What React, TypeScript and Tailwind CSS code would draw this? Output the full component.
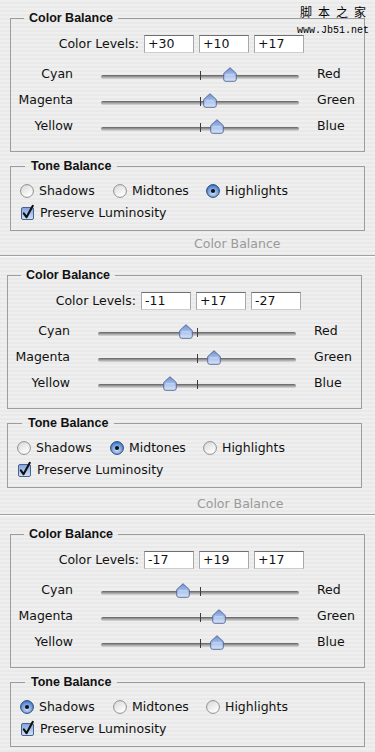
import React from "react";

type SliderDef = { left: string; right: string; value: number };
type Tone = "shadows" | "midtones" | "highlights";
type SectionDef = {
  levels: [string, string, string];
  sliders: SliderDef[];
  tone: Tone;
  variant: 1 | 2 | 3;
};

const sections: SectionDef[] = [
  {
    levels: ["+30", "+10", "+17"],
    sliders: [
      { left: "Cyan", right: "Red", value: 30 },
      { left: "Magenta", right: "Green", value: 10 },
      { left: "Yellow", right: "Blue", value: 17 },
    ],
    tone: "highlights",
    variant: 1,
  },
  {
    levels: ["-11", "+17", "-27"],
    sliders: [
      { left: "Cyan", right: "Red", value: -11 },
      { left: "Magenta", right: "Green", value: 17 },
      { left: "Yellow", right: "Blue", value: -27 },
    ],
    tone: "midtones",
    variant: 2,
  },
  {
    levels: ["-17", "+19", "+17"],
    sliders: [
      { left: "Cyan", right: "Red", value: -17 },
      { left: "Magenta", right: "Green", value: 19 },
      { left: "Yellow", right: "Blue", value: 17 },
    ],
    tone: "shadows",
    variant: 3,
  },
];

function Thumb({ value }: { value: number }) {
  const x = 99 + value * 0.99 - 7;
  return (
    <svg
      className="absolute top-[6px]"
      style={{ left: x }}
      width="14"
      height="15"
      viewBox="0 0 14 15"
    >
      <defs>
        <linearGradient id="thumbGrad" x1="0" y1="0" x2="0" y2="1">
          <stop offset="0" stopColor="#6f8fcf" />
          <stop offset="0.5" stopColor="#a3bdea" />
          <stop offset="1" stopColor="#d9e5f9" />
        </linearGradient>
      </defs>
      <path
        d="M7 0.7 L13.3 6.6 V12.2 Q13.3 14.3 11.2 14.3 H2.8 Q0.7 14.3 0.7 12.2 V6.6 Z"
        fill="url(#thumbGrad)"
        stroke="#4e6390"
        strokeWidth="0.9"
        strokeLinejoin="round"
      />
      <path d="M3 7.8 H11" stroke="#ffffff" strokeOpacity="0.45" strokeWidth="1" />
    </svg>
  );
}

function Radio({ on }: { on: boolean }) {
  if (on) {
    return (
      <svg width="14" height="14" viewBox="0 0 14 14" className="shrink-0">
        <defs>
          <radialGradient id="radioOn" cx="0.5" cy="0.65" r="0.6">
            <stop offset="0" stopColor="#d2e3fa" />
            <stop offset="1" stopColor="#3f78cc" />
          </radialGradient>
        </defs>
        <circle cx="7" cy="7" r="6.4" fill="url(#radioOn)" stroke="#2c4872" strokeWidth="1" />
        <circle cx="7" cy="7" r="2.1" fill="#111" />
      </svg>
    );
  }
  return (
    <svg width="14" height="14" viewBox="0 0 14 14" className="shrink-0">
      <defs>
        <linearGradient id="radioOff" x1="0" y1="0" x2="0.6" y2="1">
          <stop offset="0" stopColor="#d6d6d6" />
          <stop offset="1" stopColor="#ffffff" />
        </linearGradient>
      </defs>
      <circle cx="7" cy="7" r="6.4" fill="url(#radioOff)" stroke="#8d8d8d" strokeWidth="1" />
    </svg>
  );
}

function Checkbox() {
  return (
    <svg width="14" height="15" viewBox="0 0 14 15" className="shrink-0 overflow-visible">
      <defs>
        <linearGradient id="checkGrad" x1="0" y1="0" x2="0" y2="1">
          <stop offset="0" stopColor="#7fa3dc" />
          <stop offset="0.5" stopColor="#a9c3ee" />
          <stop offset="1" stopColor="#d3e1f8" />
        </linearGradient>
      </defs>
      <rect x="0.5" y="1.5" width="12" height="12" rx="1.5" fill="url(#checkGrad)" stroke="#46628f" strokeWidth="1" />
      <path d="M2.8 7.4 L5.5 11.2 L11.8 -0.2" fill="none" stroke="#111" strokeWidth="2.1" strokeLinecap="round" strokeLinejoin="round" />
    </svg>
  );
}

function LevelBox({ v }: { v: string }) {
  return (
    <div className="h-[18px] w-[50px] border border-t-[#6f6f6f] border-x-[#a8a8a8] border-b-[#cdcdcd] bg-white pl-[3px] leading-[16px]">
      {v}
    </div>
  );
}

function SliderRow({ s }: { s: SliderDef }) {
  return (
    <div className="flex h-[26px] items-center">
      <div className="w-[62px] text-right">{s.left}</div>
      <div className="relative ml-[28px] h-[26px] w-[198px]">
        <div className="absolute left-0 right-0 top-[14px] h-[4px] rounded-full bg-linear-to-b from-[#5f5f5f] via-[#a3a3a3] to-[#dadada]" />
        <div className="absolute left-[99px] top-[10px] h-[9px] w-px bg-[#3c3c3c]" />
        <Thumb value={s.value} />
      </div>
      <div className="ml-[18px]">{s.right}</div>
    </div>
  );
}

function Section({ d }: { d: SectionDef }) {
  const wrap = d.variant === 2 ? "pl-[7px] pr-[13px]" : "px-[10px]";
  const caption =
    d.variant === 2 ? "mt-[8px] pl-[197px]" : "mt-[5px] pl-[194px]";
  const sep = d.variant === 2 ? "mt-[2px]" : "mt-[3px]";
  const opts: { key: Tone; label: string }[] = [
    { key: "shadows", label: "Shadows" },
    { key: "midtones", label: "Midtones" },
    { key: "highlights", label: "Highlights" },
  ];
  return (
    <div>
      <div className={`pt-[10px] ${wrap}`}>
        <fieldset className="border border-[#9d9d9d] pb-[12px]">
          <legend className="ml-[13px] px-[5px] font-['Liberation_Sans',Arial,sans-serif] text-[12.5px] font-bold leading-[16px]">
            Color Balance
          </legend>
          <div className="mt-[9px] flex h-[18px] items-center">
            <div className="w-[128px] text-right">Color Levels:</div>
            <div className="ml-[5px] flex gap-[5px]">
              {d.levels.map((v, i) => (
                <LevelBox key={i} v={v} />
              ))}
            </div>
          </div>
          <div className="mt-[8px] flex flex-col">
            {d.sliders.map((s) => (
              <SliderRow key={s.left} s={s} />
            ))}
          </div>
        </fieldset>
        <fieldset className="mt-[6px] border border-[#9d9d9d] pb-[7px]">
          <legend className="ml-[14px] px-[6px] font-['Liberation_Sans',Arial,sans-serif] text-[12.5px] font-bold leading-[16px]">
            Tone Balance
          </legend>
          <div className="mt-[7px] flex h-[20px] items-center pl-[9px]">
            {opts.map((o) => (
              <div key={o.key} className="flex w-[93px] items-center gap-[5px]">
                <Radio on={d.tone === o.key} />
                <span>{o.label}</span>
              </div>
            ))}
          </div>
          <div className="mt-[2px] flex h-[20px] items-center gap-[5px] pl-[10px]">
            <Checkbox />
            <span>Preserve Luminosity</span>
          </div>
        </fieldset>
      </div>
      {d.variant !== 3 && (
        <>
          <div className={`${caption} h-[16px] leading-[16px] text-[#9a9a9a]`}>
            Color Balance
          </div>
          <div className={`${sep} h-px bg-[#a2a2a2]`} />
          <div className="h-px bg-[#fafafa]" />
        </>
      )}
    </div>
  );
}

export default function App() {
  return (
    <div className="relative h-[752px] w-[375px] overflow-hidden bg-[repeating-linear-gradient(180deg,#efefef_0px,#efefef_2px,#e9e9e9_2px,#e9e9e9_4px)] font-['DejaVu_Sans',sans-serif] text-[12.5px] text-[#111]">
      {sections.map((d, i) => (
        <Section key={i} d={d} />
      ))}
      <div className="absolute left-[295px] top-[4px] flex w-[76px] flex-col items-center">
        <div className="flex gap-[6px] font-['Noto_Sans_CJK_SC',sans-serif] text-[12px] leading-[16px] text-black">
          <span>脚</span>
          <span>本</span>
          <span>之</span>
          <span>家</span>
        </div>
        <div className="mt-[5px] font-['Liberation_Mono',monospace] text-[10px] leading-[12px] text-black">
          www.Jb51.net
        </div>
      </div>
    </div>
  );
}
